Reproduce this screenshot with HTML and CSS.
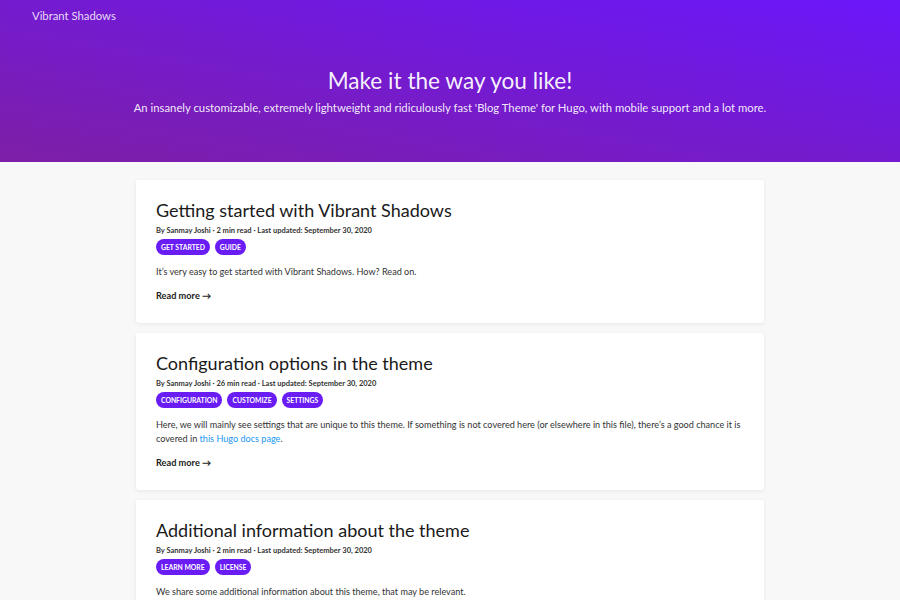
FILE: index.html
```html
<!DOCTYPE html>
<html lang="en">
<head>
<meta charset="utf-8">
<title>Vibrant Shadows</title>
<link rel="stylesheet" href="styles.css">
</head>
<body>
<header class="hero">
  <nav class="nav"><a class="brand" href="#">Vibrant Shadows</a></nav>
  <div class="hero-text">
    <h1 class="hero-title">Make it the way you like!</h1>
    <p class="hero-sub">An insanely customizable, extremely lightweight and ridiculously fast 'Blog Theme' for Hugo, with mobile support and a lot more.</p>
  </div>
</header>
<main class="posts">
  <article class="card">
    <h2 class="card-title">Getting started with Vibrant Shadows</h2>
    <div class="meta">By Sanmay Joshi · 2 min read · Last updated: September 30, 2020</div>
    <div class="tags"><a class="tag" href="#">GET STARTED</a><a class="tag" href="#">GUIDE</a></div>
    <p class="excerpt">It’s very easy to get started with Vibrant Shadows. How? Read on.</p>
    <a class="more" href="#">Read more →</a>
  </article>
  <article class="card">
    <h2 class="card-title">Configuration options in the theme</h2>
    <div class="meta">By Sanmay Joshi · 26 min read · Last updated: September 30, 2020</div>
    <div class="tags"><a class="tag" href="#">CONFIGURATION</a><a class="tag" href="#">CUSTOMIZE</a><a class="tag" href="#">SETTINGS</a></div>
    <p class="excerpt">Here, we will mainly see settings that are unique to this theme. If something is not covered here (or elsewhere in this file), there’s a good chance it is covered in <a class="link" href="#">this Hugo docs page</a>.</p>
    <a class="more" href="#">Read more →</a>
  </article>
  <article class="card">
    <h2 class="card-title">Additional information about the theme</h2>
    <div class="meta">By Sanmay Joshi · 2 min read · Last updated: September 30, 2020</div>
    <div class="tags"><a class="tag" href="#">LEARN MORE</a><a class="tag" href="#">LICENSE</a></div>
    <p class="excerpt">We share some additional information about this theme, that may be relevant.</p>
    <a class="more" href="#">Read more →</a>
  </article>
</main>
</body>
</html>
```
FILE: styles.css
```css
* { box-sizing: border-box; }
html, body { margin: 0; padding: 0; }
body {
  font-family: Lato, "Open Sans", sans-serif;
  background: #f8f8f8;
  color: #212121;
}
a { text-decoration: none; }
.hero {
  height: 162px;
  background: linear-gradient(to right top, #7d1fa6, #6b17fa);
  color: #fff;
  display: flex;
  flex-direction: column;
}
.nav {
  padding: 4px 32px 0;
  height: 30px;
}
.brand {
  color: rgba(255,255,255,0.85);
  font-size: 11.3px;
  line-height: 16px;
}
.hero-text {
  text-align: center;
  padding-top: 36px;
}
.hero-title {
  margin: 0;
  font-size: 22.6px;
  font-weight: 400;
  line-height: 30px;
  color: rgba(255,255,255,0.95);
}
.hero-sub {
  margin: 4px 0 0;
  font-size: 11.3px;
  line-height: 16px;
  color: rgba(255,255,255,0.92);
}
.posts {
  width: 628px;
  margin: 18px auto 0;
  display: flex;
  flex-direction: column;
  gap: 10px;
}
.card {
  background: #fff;
  border-radius: 3px;
  box-shadow: 0 1px 4px rgba(0,0,0,0.07);
  padding: 18px 20px 19px;
}
.card-title {
  margin: 0;
  font-size: 18px;
  font-weight: 400;
  line-height: 24px;
  color: #1a1a1a;
}
.meta {
  margin-top: 3px;
  font-size: 7.5px;
  font-weight: 700;
  line-height: 12px;
  color: #333;
}
.tags {
  margin-top: 2px;
  display: flex;
  gap: 5px;
}
.tag {
  display: block;
  height: 16px;
  background: #6a1cf5;
  color: #fff;
  font-size: 6.8px;
  font-weight: 700;
  line-height: 16px;
  padding: 0 5px;
  border-radius: 8px;
}
.excerpt {
  margin: 10px 0 0;
  font-size: 9.1px;
  line-height: 14px;
  color: #333;
}
.link { color: #2196f3; }
.more {
  display: block;
  width: fit-content;
  margin-top: 9px;
  font-size: 9.2px;
  font-weight: 700;
  line-height: 16px;
  color: #222;
}
```
